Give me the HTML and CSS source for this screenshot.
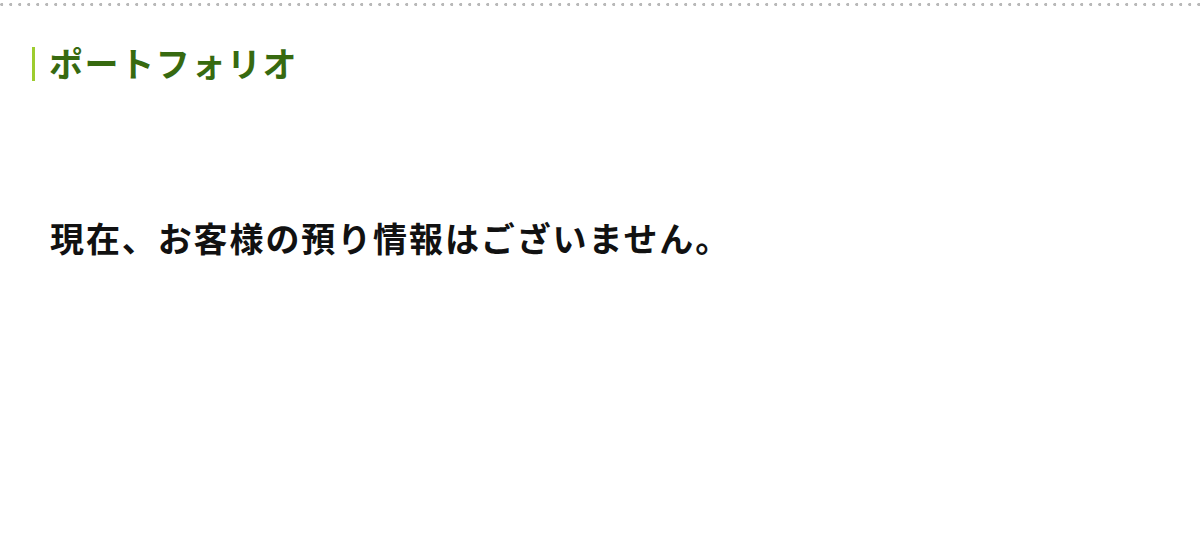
FILE: index.html
```html
<!DOCTYPE html>
<html lang="ja">
<head>
<meta charset="utf-8">
<link rel="stylesheet" href="styles.css">
</head>
<body>
<div class="dots"></div>
<main class="content">
  <h1 class="title">ポートフォリオ</h1>
  <p class="message">現在、お客様の預り情報はございません。</p>
</main>
</body>
</html>
```
FILE: styles.css
```css
html, body {
  margin: 0;
  padding: 0;
  background: #fff;
}
body {
  font-family: "Noto Sans CJK JP", "Noto Sans", sans-serif;
  width: 1200px;
  height: 534px;
  overflow: hidden;
}
.dots {
  height: 9px;
  background-image: radial-gradient(circle at 1.75px 4.5px, #b9b9b9 1.3px, transparent 1.8px);
  background-size: 9px 9px;
  background-repeat: repeat-x;
}
.content {
  padding: 0 0 0 32px;
}
.title {
  margin: 38px 0 0 0;
  border-left: 3px solid #9dcc2f;
  padding-left: 14px;
  height: 34px;
  line-height: 31px;
  font-size: 34px;
  font-weight: 700;
  color: #376a10;
  letter-spacing: 1.6px;
}
.message {
  margin: 137px 0 0 18px;
  font-size: 34px;
  line-height: 40px;
  font-weight: 700;
  color: #111;
  letter-spacing: 1.9px;
}
```
